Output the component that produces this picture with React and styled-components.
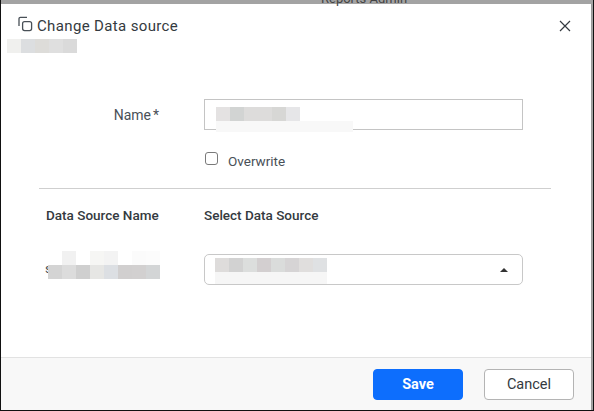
import React from 'react'
import styled, { createGlobalStyle } from 'styled-components'

const GlobalStyle = createGlobalStyle`
  html, body {
    margin: 0;
    padding: 0;
    background: #fff;
  }
  body {
    font-family: Roboto, "Liberation Sans", sans-serif;
  }
`

const Frame = styled.div`
  position: relative;
  width: 594px;
  height: 411px;
  box-sizing: border-box;
  overflow: hidden;
  background: #a3a3a3;
  padding-top: 4px;
  border-left: 1px solid #111;
  border-bottom: 1px solid #111;
  border-right: 1px solid #111;
`

const PeekText = styled.span`
  position: absolute;
  top: -9px;
  left: 320px;
  font-size: 13px;
  color: #444;
`

const Dialog = styled.div`
  height: 100%;
  margin-right: 1px;
  background: #fff;
  display: flex;
  flex-direction: column;
  border-right: 1px solid #9a9a9a;
`

const Header = styled.div`
  height: 50px;
  box-sizing: border-box;
  padding: 13px 20px 0 16px;
  display: flex;
  align-items: flex-start;
  justify-content: space-between;
`

const Title = styled.div`
  display: flex;
  align-items: flex-start;
  gap: 4px;
  font-size: 15px;
  line-height: 18px;
  color: #343a40;
  letter-spacing: 0.36px;
`

const TitleIcon = styled.svg`
  margin-top: -1px;
  flex: none;
`

const CloseButton = styled.button`
  border: 0;
  padding: 0;
  background: none;
  display: flex;
  margin-top: 3px;
`

const Patch = styled.div`
  position: absolute;
  left: ${p => p.$x}px;
  top: ${p => p.$y}px;
  display: flex;
`

const PatchCell = styled.span`
  width: ${p => p.$w || 14}px;
  height: ${p => p.$h || 14}px;
`

const Body = styled.div`
  flex: 1;
  display: flex;
  flex-direction: column;
  padding: 45px 42px 0 38px;
`

const NameRow = styled.div`
  display: flex;
  align-items: center;
`

const NameLabel = styled.label`
  width: 120px;
  box-sizing: border-box;
  text-align: right;
  font-size: 14px;
  color: #495057;
  margin-right: 45px;
`

const Required = styled.span`
  margin-left: 2px;
`

const TextBox = styled.div`
  width: 319px;
  height: 31px;
  box-sizing: border-box;
  border: 1px solid #c4c4c4;
`

const CheckRow = styled.div`
  display: flex;
  align-items: center;
  gap: 10px;
  margin: 23px 0 0 166px;
  font-size: 13.5px;
  line-height: 16px;
  color: #495057;
`

const CheckBox = styled.span`
  width: 13px;
  height: 13px;
  box-sizing: border-box;
  border: 1px solid #7a7a7a;
  border-radius: 3px;
  background: #fff;
  margin-top: -5px;
`

const Divider = styled.div`
  height: 1px;
  background: #cfcfcf;
  margin-top: 19px;
  width: 512px;
`

const ColumnHeads = styled.div`
  display: flex;
  margin: 19px 0 0 7px;
  font-size: 13.5px;
  font-weight: 500;
  color: #343a40;
  line-height: 15px;
`

const DataSourceHead = styled.div`
  width: 158px;
`

const SelectRow = styled.div`
  display: flex;
  margin: 31px 0 0 165px;
`

const SelectBox = styled.div`
  width: 319px;
  height: 31px;
  box-sizing: border-box;
  border: 1px solid #c8c8c8;
  border-radius: 5px;
  display: flex;
  align-items: center;
  justify-content: flex-end;
  padding-right: 14px;
`

const Arrow = styled.span`
  width: 0;
  height: 0;
  border-left: 4px solid transparent;
  border-right: 4px solid transparent;
  border-bottom: 4px solid #333;
`

const HiddenName = styled.span`
  position: absolute;
  left: 44px;
  top: 261px;
  font-size: 13px;
  color: #495057;
`

const Footer = styled.div`
  height: 53px;
  box-sizing: border-box;
  background: #f8f8f8;
  border-top: 1px solid #e2e2e2;
  display: flex;
  justify-content: flex-end;
  align-items: center;
  gap: 21px;
  padding: 1px 17px 0 0;
`

const Button = styled.button`
  width: 90px;
  height: 31px;
  box-sizing: border-box;
  border-radius: 4px;
  font-family: inherit;
  font-size: 14.5px;
  font-weight: ${p => (p.$primary ? 700 : 400)};
  color: ${p => (p.$primary ? '#fff' : '#343a40')};
  background: ${p => (p.$primary ? '#0d6efd' : '#fff')};
  border: 1px solid ${p => (p.$primary ? '#0d6efd' : '#b4b4b4')};
`

const CopyIcon = () => (
  <TitleIcon width="16" height="16" viewBox="0 0 16 16" fill="none" stroke="#495057" strokeWidth="1.3">
    <rect x="5.6" y="5.6" width="9" height="9" rx="2" />
    <path d="M2 10V2.8C2 2 2.6 1.4 3.4 1.4H10" />
  </TitleIcon>
)

const CloseIcon = () => (
  <svg width="12" height="12" viewBox="0 0 12 12" stroke="#343a40" strokeWidth="1.2">
    <path d="M1 1l10 10M11 1L1 11" />
  </svg>
)

// pixelated areas over the hidden values, [x, y, cells]
const patches = [
  [7, 39, ['#f0f0ee', '#dcdee0', '#dddcd9', '#dfdfdf', '#dadada']],
  [216, 107, ['#e4e2e2', '#d2d4d3', '#dddcdb', '#dddcdb', '#d7d7d5', '#e6e6e8']],
  [62, 251, ['#f1f1f1', '#fff', '#f6f6f4', '#f3f3f3', '#fff', '#fbfbfb', '#fcfcfc']],
  [48, 265, ['#d4d4d4', '#dcdcdc', '#cfcfcf', '#e6e6e4', '#dcdfe3', '#d1cfcf', '#d2d0d0', '#d3d5d6']],
  [215, 258, ['#dedcdb', '#d2d2d2', '#dcdedd', '#d3cfd0', '#dadcdb', '#d6d4d5', '#e0dedd', '#dfe1e3']]
]

export default function App () {
  return (
    <Frame>
      <GlobalStyle />
      <PeekText>Reports Admin</PeekText>
      <Dialog>
        <Header>
          <Title><CopyIcon />Change Data source</Title>
          <CloseButton><CloseIcon /></CloseButton>
        </Header>
        <Body>
          <NameRow>
            <NameLabel>Name<Required>*</Required></NameLabel>
            <TextBox />
          </NameRow>
          <CheckRow><CheckBox />Overwrite</CheckRow>
          <Divider />
          <ColumnHeads>
            <DataSourceHead>Data Source Name</DataSourceHead>
            <div>Select Data Source</div>
          </ColumnHeads>
          <SelectRow>
            <SelectBox><Arrow /></SelectBox>
          </SelectRow>
        </Body>
        <Footer>
          <Button $primary>Save</Button>
          <Button>Cancel</Button>
        </Footer>
      </Dialog>
      <HiddenName>s</HiddenName>
      {patches.map(([x, y, cells]) => (
        <Patch key={x + '-' + y} $x={x - 1} $y={y}>
          {cells.map((c, i) => <PatchCell key={i} style={{ background: c }} />)}
        </Patch>
      ))}
      <Patch $x={215} $y={121}><PatchCell $w={137} $h={11} style={{ background: '#f8f8f8' }} /></Patch>
      <Patch $x={214} $y={272}><PatchCell $w={112} $h={12} style={{ background: '#f6f6f6' }} /></Patch>
    </Frame>
  )
}
